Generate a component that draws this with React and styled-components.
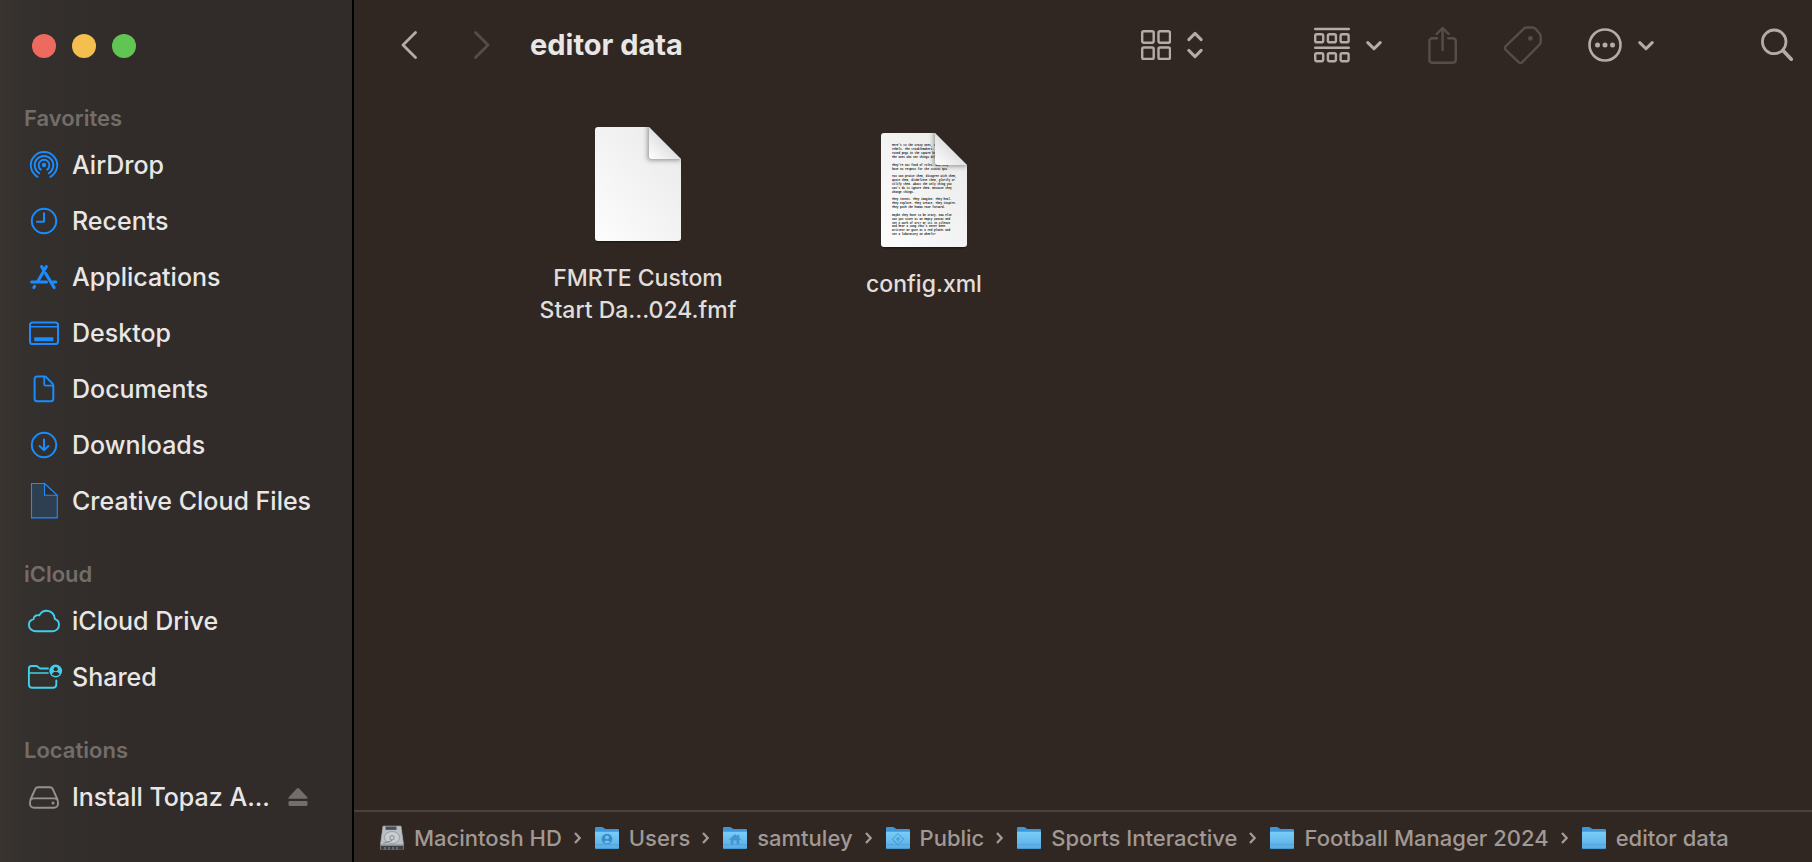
import { Fragment } from "react";
import styled, { createGlobalStyle } from "styled-components";

const GlobalStyle = createGlobalStyle`
  * {
    box-sizing: border-box;
  }

  body {
    margin: 0;
    background: #302722;
    color: #e9e7e6;
    font-family: Inter, "Liberation Sans", sans-serif;
    font-size: 25px;
  }

  svg {
    display: block;
    flex: none;
  }
`;

const Window = styled.div`
  display: flex;
  height: 100vh;
  overflow: hidden;
`;

const Sidebar = styled.aside`
  display: flex;
  flex: none;
  flex-direction: column;
  gap: 26px;
  width: 354px;
  border-right: 2px solid #000;
  background: linear-gradient(90deg, #39342f 0, #34302d 24px, #312c2a 130px);
`;

const WindowControls = styled.div`
  display: flex;
  gap: 16px;
  padding: 34px 32px 14px;
  height: 73px;
`;

const ControlDot = styled.button`
  width: 24px;
  height: 24px;
  padding: 0;
  border: 0;
  border-radius: 50%;
  background: ${(props) => props.$color};
`;

const SectionTitle = styled.h2`
  margin: 0;
  padding-left: 24px;
  color: #736d6a;
  font-size: 22px;
  font-weight: 600;
  line-height: 38px;
`;

const SidebarList = styled.ul`
  margin: 0;
  padding: 0;
  list-style: none;
`;

const SidebarItem = styled.li`
  display: flex;
  align-items: center;
  height: 56px;
  padding-right: 44px;
`;

const SidebarLink = styled.a`
  display: flex;
  flex: 1;
  align-items: center;
  gap: 8px;
  padding-left: 24px;
  color: inherit;
  font-size: 25px;
  font-weight: 500;
  line-height: 32px;
  text-decoration: none;
  white-space: nowrap;

  svg {
    color: ${(props) => props.$color};
  }
`;

const IconButton = styled.button`
  display: flex;
  align-items: center;
  gap: ${(props) => props.$gap || 16}px;
  padding: 0;
  border: 0;
  background: none;
  color: #b5aca7;

  &:disabled {
    color: #564d48;
  }
`;

const EjectButton = styled(IconButton)`
  color: #736e6b;
`;

const Main = styled.main`
  display: flex;
  flex: 1;
  flex-direction: column;
  min-width: 0;
`;

const Toolbar = styled.header`
  display: flex;
  flex: none;
  align-items: center;
  height: 90px;
  padding: 0 19px 0 47px;
`;

const History = styled.div`
  display: flex;
  gap: 57px;
`;

const FolderTitle = styled.h1`
  flex: 1;
  margin: 0 0 0 40px;
  font-size: 29px;
  font-weight: 700;
  line-height: 36px;
`;

const Tools = styled.div`
  display: flex;
  align-items: center;
  gap: 107px;
`;

const ToolGroup = styled.div`
  display: flex;
  align-items: center;
  gap: 46px;
`;

const IconCanvas = styled.section`
  position: relative;
  flex: 1;
`;

const File = styled.button`
  position: absolute;
  left: ${(props) => props.$x}px;
  top: ${(props) => props.$y}px;
  display: flex;
  flex-direction: column;
  align-items: center;
  gap: 18px;
  width: 220px;
  padding: 0;
  border: 0;
  background: none;
  color: #e0dedc;
  font-family: inherit;
  font-size: 23px;
  font-weight: 500;
  line-height: 32px;
  white-space: pre-line;
`;

const PathBar = styled.nav`
  display: flex;
  flex: none;
  align-items: center;
  height: 52px;
  padding: 2px 26px 0;
  border-top: 2px solid #4c423d;
  color: #a09995;
`;

const PathLink = styled.a`
  display: flex;
  align-items: center;
  gap: 10px;
  color: inherit;
  font-size: 22px;
  font-weight: 500;
  line-height: 28px;
  text-decoration: none;
  white-space: nowrap;
`;

const PathArrow = styled.svg`
  margin: 0 14px 0 12px;
`;

const Icon = ({ size = 40, height, children, width = 2 }) => (
  <svg
    width={size}
    height={height || size}
    viewBox={`0 0 ${size} ${height || size}`}
    fill="none"
    stroke="currentColor"
    strokeWidth={width}
    strokeLinecap="round"
    strokeLinejoin="round"
    aria-hidden="true"
  >
    {children}
  </svg>
);

const AirDropIcon = () => (
  <Icon width={1.9}>
    <circle cx="20" cy="20" r="2.2" fill="currentColor" stroke="none" />
    <path d="M16.9 24.6a5.4 5.4 0 1 1 6.2 0" />
    <path d="M15.2 28.2a9.3 9.3 0 1 1 9.6 0" />
    <path d="M13.6 31.8a13.2 13.2 0 1 1 12.8 0" />
  </Icon>
);

const RecentsIcon = () => (
  <Icon>
    <circle cx="20" cy="20" r="12.2" />
    <path d="M20 12.2v8.6h-7" />
  </Icon>
);

const ApplicationsIcon = () => (
  <Icon width={3}>
    <path d="M17.6 9.6l2 3.4" />
    <path d="M22.4 9.6l-8.6 15" />
    <path d="M21.6 16.4l8.6 14.2" />
    <path d="M7.6 25h15M28.6 25h3.2" />
    <path d="M10.6 29.4l-.8 1.2" />
  </Icon>
);

const DesktopIcon = () => (
  <Icon>
    <rect x="6" y="9.5" width="28" height="21.5" rx="2.6" />
    <path d="M6.5 13.8h27" strokeWidth="1.6" />
    <rect x="10.2" y="24.2" width="19.2" height="4" rx=".6" fill="currentColor" stroke="none" />
  </Icon>
);

const DocumentIcon = () => (
  <Icon>
    <path d="M13.2 7.6h7.3c.8 0 1.3.2 1.9.8l6.1 6.2c.6.6.8 1.2.8 2v13.1c0 1.7-.9 2.6-2.6 2.6H13.2c-1.7 0-2.6-.9-2.6-2.6V10.2c0-1.7.9-2.6 2.6-2.6z" />
    <path d="M20.2 8v7.2c0 1 .5 1.5 1.5 1.5h7.3" strokeWidth="1.7" />
  </Icon>
);

const DownloadsIcon = () => (
  <Icon>
    <circle cx="20" cy="20" r="12.2" />
    <path d="M20 14.4v10.8M15.6 21l4.4 4.3 4.4-4.3" />
  </Icon>
);

const CreativeCloudIcon = () => (
  <Icon width={1.1}>
    <path d="M7.5 2.5h13l12.8 12.8v21.6H7.5z" fill="#2f3f52" strokeLinejoin="miter" />
    <path d="M20.5 2.5v11.8h12.8z" fill="#312c2a" strokeLinejoin="miter" />
  </Icon>
);

const CloudIcon = () => (
  <Icon width={1.9}>
    <path d="M12.3 30.2c-4.3 0-7.4-2.6-7.4-6.2 0-3.1 2-5.3 4.7-5.9 0-2.6 2.9-4.7 5.7-3.7 1.5-2.9 4.2-4.6 7.3-4.6 4.7 0 8.3 3.7 8.4 8.4 2.6.8 4 3 4 5.5 0 3.7-2.7 6.5-6.4 6.5z" />
  </Icon>
);

const SharedIcon = () => (
  <Icon width={1.9}>
    <path d="M24 11.5h-7.2c-1 0-1.4-.3-2-.9l-.9-.8c-.6-.6-1.1-.8-2-.8H7.5C5.8 9 4.900 10 4.900 11.700v15.800c0 2.100 1.100 3.200 3.200 3.200h21c2.100 0 3.200-1.100 3.200-3.200V23.500" />
    <path d="M5 16h19" strokeWidth="1.6" />
    <circle cx="31.7" cy="14" r="6.4" fill="currentColor" stroke="none" />
    <circle cx="31.7" cy="12.2" r="2.1" fill="#312c2a" stroke="none" />
    <path d="M27.8 17.3c.7-1.6 2.3-2.2 3.9-2.2s3.2.6 3.9 2.2c-1 1-2.3 1.6-3.9 1.6s-2.9-.6-3.9-1.6z" fill="#312c2a" stroke="none" />
  </Icon>
);

const DriveIcon = () => (
  <Icon width={1.9}>
    <path d="M6.5 22.5l4.7-10.3c.6-1.3 1.4-1.9 2.9-1.9h11.8c1.5 0 2.3.6 2.9 1.9l4.7 10.3" />
    <rect x="6" y="21.4" width="28" height="9.3" rx="4" />
    <circle cx="29" cy="26.1" r="1.5" fill="currentColor" stroke="none" />
  </Icon>
);

const EjectIcon = () => (
  <svg width="20" height="20" viewBox="0 0 20 20" fill="currentColor" aria-hidden="true">
    <path d="M8.9 1.4c.7-.7 1.5-.7 2.2 0l8 8.5c.9.9.5 1.9-.7 1.9H1.6C.4 11.8 0 10.8.9 9.900z" />
    <rect x=".5" y="14" width="19" height="5" rx="1.3" />
  </svg>
);

const BackIcon = () => (
  <Icon size={16} height={30} width={2.8}>
    <path d="M14.5 2.5L2 15l12.5 12.5" />
  </Icon>
);

const ForwardIcon = () => (
  <Icon size={16} height={30} width={2.8}>
    <path d="M1.5 2.5L14 15 1.5 27.5" />
  </Icon>
);

const ChevronIcon = () => (
  <Icon size={16} width={3}>
    <path d="M1.8 5.6L8 11.8l6.2-6.2" />
  </Icon>
);

const GridIcon = () => (
  <Icon size={30} width={2.4}>
    {[1.2, 17.5].map((y) =>
      [1.2, 17.5].map((x) => (
        <rect key={`${x}-${y}`} x={x} y={y} width="11.5" height="11.5" rx="1.6" />
      ))
    )}
  </Icon>
);

const UpDownIcon = () => (
  <Icon size={24} height={28} width={3}>
    <path d="M5.8 8.6L12 2.4l6.2 6.2M5.8 19.4l6.2 6.2 6.2-6.2" />
  </Icon>
);

const GroupIcon = () => (
  <Icon size={36} width={2.4}>
    <path d="M1.2 2h33.6M1.2 20.8h33.6" />
    {[7.3, 26.2].map((y) =>
      [1.2, 13.9, 26.6].map((x) => (
        <rect key={`${x}-${y}`} x={x} y={y} width="8" height="8" rx="1.6" />
      ))
    )}
  </Icon>
);

const ShareIcon = () => (
  <Icon size={30} height={40} width={2.4}>
    <path d="M9 13.2H4.8c-2.2 0-3.4 1.2-3.4 3.4v17.8c0 2.2 1.2 3.4 3.4 3.4h19.6c2.2 0 3.4-1.2 3.4-3.4V16.6c0-2.2-1.2-3.4-3.4-3.4h-4.2" />
    <path d="M14.6 25V3.2M8.6 9l6-6 6 6" />
  </Icon>
);

const TagIcon = () => (
  <Icon size={38} width={2.4}>
    <path d="M1.8 20.2L19.6 2.9c1-1 1.9-1.4 3.3-1.4h5.3c1.4 0 2.3.4 3.3 1.4l3.9 4.3c.9 1 1.3 1.9 1.3 3.3v5.1c0 1.4-.4 2.3-1.4 3.3L18.2 36.2c-1.2 1.2-2.4 1.2-3.6 0L1.8 23.8c-1.1-1.2-1.1-2.4 0-3.6z" />
    <circle cx="26.4" cy="12.4" r="2.4" fill="currentColor" stroke="none" />
  </Icon>
);

const MoreIcon = () => (
  <Icon size={34} width={2.6}>
    <circle cx="17" cy="17" r="15.5" />
    {[9.5, 17, 24.5].map((x) => (
      <circle key={x} cx={x} cy="17" r="2.5" fill="currentColor" stroke="none" />
    ))}
  </Icon>
);

const SearchIcon = () => (
  <Icon size={32} height={34} width={2.8}>
    <circle cx="13.2" cy="13.8" r="11.8" />
    <path d="M22 22.6l8.3 8.6" strokeWidth="3.6" />
  </Icon>
);

const LETTER = [
  "Here's to the crazy ones, the",
  "rebels. The troublemakers. The",
  "round pegs in the square holes.",
  "The ones who see things diff",
  "",
  "They're not fond of rules. And they",
  "have no respect for the status quo.",
  "",
  "You can praise them, disagree with them,",
  "quote them, disbelieve them, glorify or",
  "vilify them. About the only thing you",
  "can't do is ignore them. Because they",
  "change things.",
  "",
  "They invent. They imagine. They heal.",
  "They explore. They create. They inspire.",
  "They push the human race forward.",
  "",
  "Maybe they have to be crazy. How else",
  "can you stare at an empty canvas and",
  "see a work of art? Or sit in silence",
  "and hear a song that's never been",
  "written? Or gaze at a red planet and",
  "see a laboratory on wheels?",
];

// sheet of paper with its top right corner folded over
const PaperIcon = ({ id, fold = 32, lines = [] }) => {
  const edge = 86 - fold;
  return (
    <svg width="90" height="118" viewBox="-2 -1 90 118" aria-hidden="true">
      <defs>
        <linearGradient id={`${id}-page`} x1="0" y1="1" x2="1" y2="0">
          <stop offset="0" stopColor="#fdfdfd" />
          <stop offset="1" stopColor="#e9e9e9" />
        </linearGradient>
        <linearGradient id={`${id}-fold`} x1="0" y1="1" x2=".5" y2=".5">
          <stop offset="0" stopColor="#ffffff" />
          <stop offset="1" stopColor="#e2e2e2" />
        </linearGradient>
        <filter id={`${id}-blur`} x="-50%" y="-50%" width="200%" height="200%">
          <feGaussianBlur stdDeviation="2.5" />
        </filter>
        <clipPath id={`${id}-clip`}>
          <path d={`M3 0H${edge}L86 ${fold}V111a3 3 0 0 1-3 3H3a3 3 0 0 1-3-3V3a3 3 0 0 1 3-3z`} />
        </clipPath>
      </defs>
      <rect x="1" y="100" width="84" height="15.5" rx="3" fill="#15100e" opacity=".6" />
      <g clipPath={`url(#${id}-clip)`}>
        <rect width="86" height="114" fill={`url(#${id}-page)`} />
        <g transform="scale(.1)" fill="#111" fontFamily="Liberation Mono, monospace" fontSize="27" fontWeight="700">
          {lines.map((line, i) => (
            <text key={i} x="110" y={134 + i * 38.6}>
              {line}
            </text>
          ))}
        </g>
        <path
          d={`M${edge - 1} 0V${fold + 1}H86V${fold - 6}L${edge} -6z`}
          fill="#444"
          opacity=".6"
          filter={`url(#${id}-blur)`}
        />
        <path d={`M${edge} 0V${fold - 3}q0 3 3 3H86z`} fill={`url(#${id}-fold)`} />
      </g>
    </svg>
  );
};

const HardDiskIcon = () => (
  <svg width="24" height="26" viewBox="0 0 24 26" aria-hidden="true">
    <path d="M3 1h18l2.6 19v4.5H.4V20z" fill="#b4babd" />
    <path d="M3 1h18l2.6 18.5H.4z" fill="#b9c0c3" stroke="#8f979b" strokeWidth=".6" />
    <rect x="5.5" y="1.5" width="11" height="3.4" fill="#4c5358" />
    <ellipse cx="12" cy="12.5" rx="7.5" ry="6" fill="#c9ced0" stroke="#8f979b" strokeWidth=".8" />
    <circle cx="12" cy="12.8" r="2.2" fill="none" stroke="#838b90" />
    <path d="M12 15.5c-4 2-7 1.5-8.5 3" fill="none" stroke="#788187" />
    <path d="M.8 20h22.4v4.6H.8z" fill="#3b4044" />
    <path d="M1 20.4h22M5 22v2.5M9 22v2.5M13 22v2.5M17 22v2.5" stroke="#92999d" strokeWidth="1" />
  </svg>
);

const FOLDER_MARKS = {
  person: (
    <>
      <circle cx="12" cy="14" r="5.3" fill="#388cc7" />
      <circle cx="12" cy="12.4" r="1.9" fill="#6fc3f3" />
      <path d="M8.8 17.1q3.2-3.4 6.4 0-3.2 2.8-6.4 0z" fill="#6fc3f3" />
    </>
  ),
  home: (
    <path
      d="M6 14.4l6-5.4 2.5 2.2V9.7h1.8v3.1l1.7 1.6-.8.9-.9-.8v5h-2.7v-4h-3.2v4H7.7v-5l-.9.8z"
      fill="#4297d2"
    />
  ),
  sign: (
    <g fill="none" stroke="#3f97d3" strokeWidth="1">
      <path d="M12 8.500l5.700 5.700L12 19.900l-5.700-5.700z" />
      <path d="M10 14h4M12 12v4.500" />
    </g>
  ),
};

const FolderIcon = ({ mark }) => (
  <svg width="24" height="26" viewBox="0 0 24 26" aria-hidden="true">
    <defs>
      <linearGradient id="folder-front" x1="0" y1="0" x2="0" y2="1">
        <stop offset="0" stopColor="#7accf8" />
        <stop offset="1" stopColor="#58abe2" />
      </linearGradient>
    </defs>
    <path d="M0 3.2Q0 2 1.2 2h5.6q.8 0 1.4.5L9.7 3.6q.6.5 1.4.5h11.7Q24 4.1 24 5.3V12H0z" fill="#3f96d6" />
    <path d="M0 6.8h24v16q0 1.2-1.2 1.2H1.2Q0 24 0 22.8z" fill="url(#folder-front)" />
    <path d="M0 19.7h24" stroke="#4b9fd9" strokeWidth=".8" />
    <path d="M.2 23.6h23.6" stroke="#418fc9" strokeWidth=".8" />
    {FOLDER_MARKS[mark]}
  </svg>
);

const BLUE = "#1a8cff";
const CYAN = "#40d0ea";
const GRAY = "#96918e";

const sections = [
  {
    title: "Favorites",
    color: BLUE,
    items: [
      ["AirDrop", AirDropIcon],
      ["Recents", RecentsIcon],
      ["Applications", ApplicationsIcon],
      ["Desktop", DesktopIcon],
      ["Documents", DocumentIcon],
      ["Downloads", DownloadsIcon],
      ["Creative Cloud Files", CreativeCloudIcon],
    ],
  },
  {
    title: "iCloud",
    color: CYAN,
    items: [
      ["iCloud Drive", CloudIcon],
      ["Shared", SharedIcon],
    ],
  },
  {
    title: "Locations",
    color: GRAY,
    ejectable: true,
    items: [["Install Topaz A...", DriveIcon]],
  },
];

const path = [
  { name: "Macintosh HD", disk: true },
  { name: "Users", mark: "person" },
  { name: "samtuley", mark: "home" },
  { name: "Public", mark: "sign" },
  { name: "Sports Interactive" },
  { name: "Football Manager 2024" },
  { name: "editor data" },
];

const App = () => {
  return (
    <>
      <GlobalStyle />
      <Window>
        <Sidebar>
          <WindowControls>
            <ControlDot $color="#ed6a5f" aria-label="Close" />
            <ControlDot $color="#f5bf4f" aria-label="Minimize" />
            <ControlDot $color="#61c554" aria-label="Zoom" />
          </WindowControls>
          {sections.map((section) => (
            <section key={section.title}>
              <SectionTitle>{section.title}</SectionTitle>
              <SidebarList>
                {section.items.map(([name, ItemIcon]) => (
                  <SidebarItem key={name}>
                    <SidebarLink href="#" $color={section.color}>
                      <ItemIcon />
                      {name}
                    </SidebarLink>
                    {section.ejectable && (
                      <EjectButton aria-label="Eject">
                        <EjectIcon />
                      </EjectButton>
                    )}
                  </SidebarItem>
                ))}
              </SidebarList>
            </section>
          ))}
        </Sidebar>
        <Main>
          <Toolbar>
            <History>
              <IconButton aria-label="Back">
                <BackIcon />
              </IconButton>
              <IconButton aria-label="Forward" disabled>
                <ForwardIcon />
              </IconButton>
            </History>
            <FolderTitle>editor data</FolderTitle>
            <Tools>
              <IconButton aria-label="View" $gap={12}>
                <GridIcon />
                <UpDownIcon />
              </IconButton>
              <ToolGroup>
                <IconButton aria-label="Group">
                  <GroupIcon />
                  <ChevronIcon />
                </IconButton>
                <IconButton aria-label="Share" disabled>
                  <ShareIcon />
                </IconButton>
                <IconButton aria-label="Edit tags" disabled>
                  <TagIcon />
                </IconButton>
                <IconButton aria-label="More actions">
                  <MoreIcon />
                  <ChevronIcon />
                </IconButton>
              </ToolGroup>
              <IconButton aria-label="Search">
                <SearchIcon />
              </IconButton>
            </Tools>
          </Toolbar>
          <IconCanvas>
            <File $x={174} $y={36}>
              <PaperIcon id="blank" />
              {"FMRTE Custom\nStart Da...024.fmf"}
            </File>
            <File $x={460} $y={42}>
              <PaperIcon id="text" lines={LETTER} />
              config.xml
            </File>
          </IconCanvas>
          <PathBar aria-label="Path">
            {path.map((step, i) => (
              <Fragment key={step.name}>
                {i > 0 && (
                  <PathArrow width="7" height="14" viewBox="0 0 7 14" fill="none" stroke="currentColor" strokeWidth="2.4">
                    <path d="M1 2l4.7 5L1 12" />
                  </PathArrow>
                )}
                <PathLink href="#">
                  {step.disk ? <HardDiskIcon /> : <FolderIcon mark={step.mark} />}
                  {step.name}
                </PathLink>
              </Fragment>
            ))}
          </PathBar>
        </Main>
      </Window>
    </>
  );
};

export default App;
